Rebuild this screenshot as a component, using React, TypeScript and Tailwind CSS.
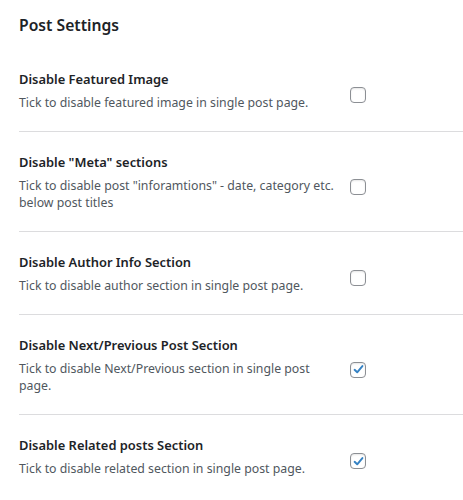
import React, { useState } from 'react';

type Setting = {
  id: string;
  title: string;
  desc: string;
  checked: boolean;
};

const initial: Setting[] = [
  {
    id: 'featured',
    title: 'Disable Featured Image',
    desc: 'Tick to disable featured image in single post page.',
    checked: false,
  },
  {
    id: 'meta',
    title: 'Disable "Meta" sections',
    desc: 'Tick to disable post "inforamtions" - date, category etc. below post titles',
    checked: false,
  },
  {
    id: 'author',
    title: 'Disable Author Info Section',
    desc: 'Tick to disable author section in single post page.',
    checked: false,
  },
  {
    id: 'nextprev',
    title: 'Disable Next/Previous Post Section',
    desc: 'Tick to disable Next/Previous section in single post page.',
    checked: true,
  },
  {
    id: 'related',
    title: 'Disable Related posts Section',
    desc: 'Tick to disable related section in single post page.',
    checked: true,
  },
];

const Checkbox: React.FC<{ checked: boolean; onChange: () => void }> = ({ checked, onChange }) => (
  <button
    type="button"
    onClick={onChange}
    className="w-4 h-4 rounded-[4px] border border-[#8c8f94] bg-white flex items-center justify-center shadow-[inset_0_1px_2px_rgba(0,0,0,0.1)]"
  >
    {checked && (
      <svg viewBox="0 0 16 16" className="w-[13px] h-[13px]">
        <path d="M3.2 8.4 L6.4 11.4 L12.8 3.8" fill="none" stroke="#3582c4" strokeWidth="2.4" strokeLinecap="round" strokeLinejoin="round" />
      </svg>
    )}
  </button>
);

export default function App() {
  const [settings, setSettings] = useState(initial);

  const toggle = (id: string) =>
    setSettings((prev) => prev.map((s) => (s.id === id ? { ...s, checked: !s.checked } : s)));

  return (
    <div className="min-h-screen bg-white pl-[19px] pt-[14px] font-['Noto_Sans',sans-serif]">
      <h2 className="text-[15.7px] leading-[22px] font-semibold text-[#1d2327]">Post Settings</h2>

      <div className="mt-[13px]">
        {settings.map((s, i) => (
          <div
            key={s.id}
            className={`flex items-center pt-[20px] pb-[20px] ${i < settings.length - 1 ? 'border-b border-[#dcdcde]' : ''}`}
          >
            <div className="w-[331px]">
              <div className="text-[12.9px] leading-[20px] font-semibold text-[#1d2327]">{s.title}</div>
              <p className="mt-[5px] text-[12.3px] leading-[17px] text-[#50575e] pr-[10px]">{s.desc}</p>
            </div>
            <div className="mt-[10px]">
              <Checkbox checked={s.checked} onChange={() => toggle(s.id)} />
            </div>
          </div>
        ))}
      </div>
    </div>
  );
}
